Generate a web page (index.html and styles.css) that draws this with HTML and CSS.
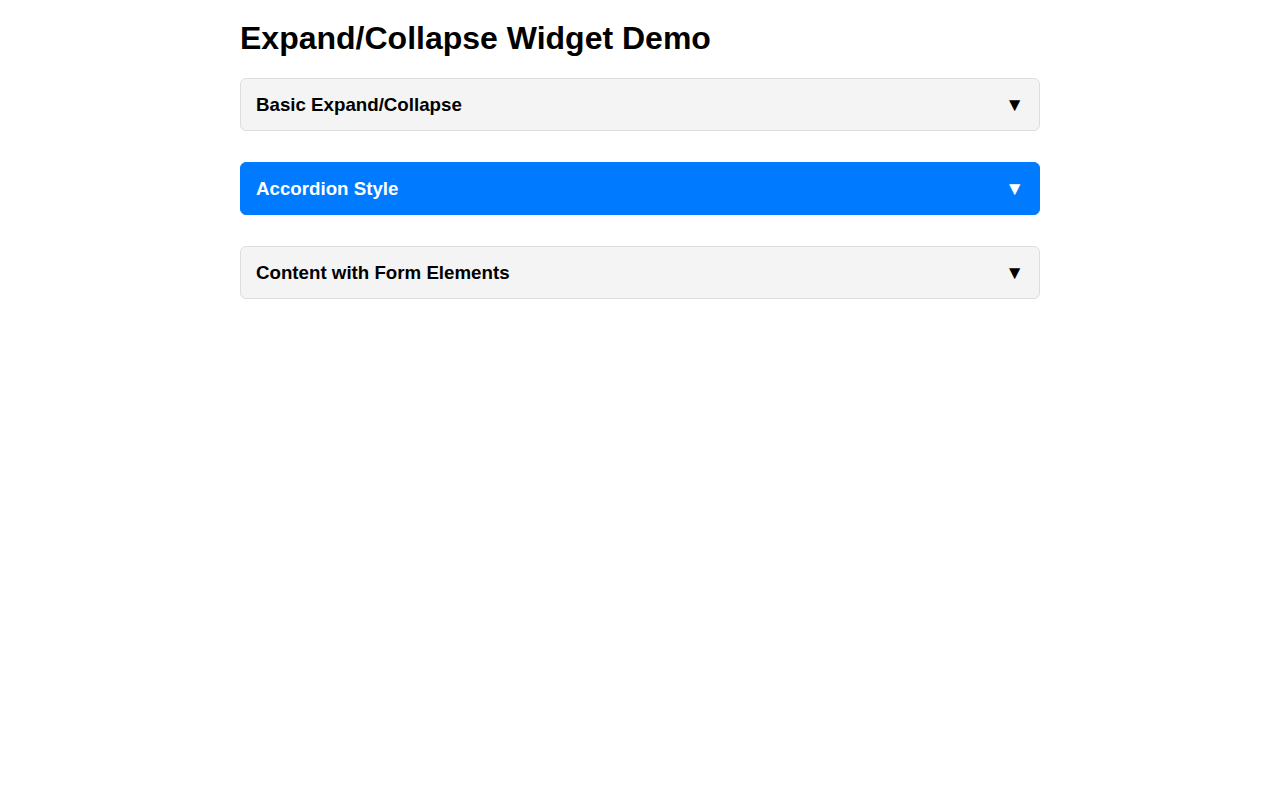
FILE: index.html
```html
<!DOCTYPE html>
<html lang="en">
  <head>
    <meta charset="UTF-8">
    <meta name="viewport" content="width=device-width, initial-scale=1.0">
    <title>Expand/Collapse Widget Demo</title>
    <link rel="stylesheet" href="styles.css">
  </head>
  <body>
    <div class="container">
      <h1>Expand/Collapse Widget Demo</h1>

      <div class="widget">
        <div class="widget-header">
          <h3>Basic Expand/Collapse</h3>
          <span class="arrow">&#9660;</span>
        </div>
      </div>

      <div class="widget accordion">
        <div class="widget-header">
          <h3>Accordion Style</h3>
          <span class="arrow">&#9660;</span>
        </div>
      </div>

      <div class="widget">
        <div class="widget-header">
          <h3>Content with Form Elements</h3>
          <span class="arrow">&#9660;</span>
        </div>
      </div>
    </div>
  </body>
</html>
```

FILE: styles.css
```css
body {
  font-family: 'Liberation Sans', Arial, sans-serif;
  margin: 0;
  background-color: #ffffff;
  color: #000000;
}

.container {
  max-width: 800px;
  margin: 0 auto;
  padding-top: 20px;
}

h1 {
  font-size: 32px;
  margin: 0 0 21px 0;
}

.widget {
  margin-bottom: 31px;
}

.widget-header {
  display: flex;
  justify-content: space-between;
  align-items: center;
  background-color: #f4f4f4;
  border: 1px solid #dddddd;
  border-radius: 6px;
  padding: 15px;
  cursor: pointer;
}

.widget-header h3 {
  margin: 0;
  font-size: 1.17em;
  line-height: 21px;
}

.accordion .widget-header {
  background-color: #007bff;
  border-color: #007bff;
  color: #ffffff;
}

.arrow {
  font-size: 19px;
  line-height: 21px;
}
```
